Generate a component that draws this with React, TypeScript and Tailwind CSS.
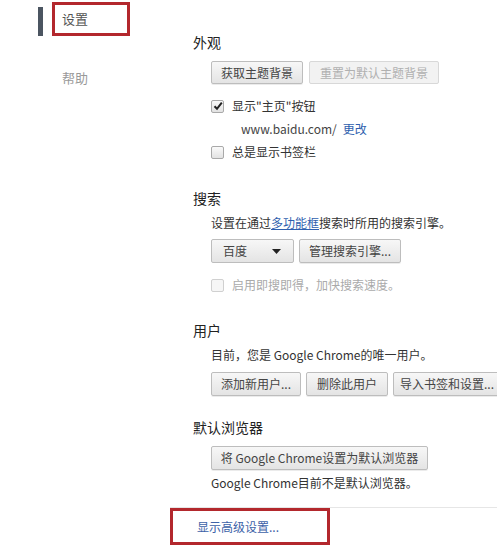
import React from 'react'

const font = { fontFamily: '"Noto Sans CJK SC", "Liberation Sans", sans-serif' }

const Button = ({
  label,
  width,
  disabled = false,
}: {
  label: string
  width: string
  disabled?: boolean
}) => (
  <div
    className={`flex h-full shrink-0 items-center justify-center whitespace-nowrap rounded-[2px] border text-[12px] ${width} ${
      disabled
        ? 'border-[#d8d8d8] bg-[#f2f2f2] text-[#b0b0b0]'
        : 'border-[#bdbdbd] bg-gradient-to-b from-[#f7f7f7] to-[#e4e4e4] text-[#444] shadow-[0_1px_0_rgba(0,0,0,0.08)]'
    }`}
  >
    {label}
  </div>
)

const Checkbox = ({ checked = false, disabled = false }: { checked?: boolean; disabled?: boolean }) => (
  <div
    className={`flex h-[13px] w-[13px] shrink-0 items-center justify-center rounded-[2px] border ${
      disabled ? 'border-[#d0d0d0] bg-[#f6f6f6]' : 'border-[#a9a9a9] bg-gradient-to-b from-[#fafafa] to-[#e2e2e2]'
    }`}
  >
    {checked && (
      <svg width="10" height="10" viewBox="0 0 10 10">
        <path d="M1.5 5.2 L4 7.8 L8.8 1.6" fill="none" stroke="#222" strokeWidth="2" />
      </svg>
    )}
  </div>
)

const Heading = ({ children, mt }: { children: React.ReactNode; mt: string }) => (
  <div className={`flex h-[20px] items-center pl-[23px] text-[14px] text-[#222] ${mt}`}>{children}</div>
)

export default function App() {
  return (
    <div className="flex h-[555px] w-[497px] overflow-hidden bg-white" style={font}>
      {/* 左侧导航 */}
      <div className="flex w-[170px] shrink-0 flex-col">
        <div className="ml-[38px] mt-[2px] flex">
          <div className="mt-[5px] h-[29px] w-[5px] bg-[#4b5561]" />
          <div className="ml-[9px] flex h-[34px] w-[78px] items-center border-[3px] border-[#b3282d] pl-[7px] text-[13px] text-[#555]">
            设置
          </div>
        </div>
        <div className="ml-[62px] mt-[32px] text-[13px] text-[#999]">帮助</div>
      </div>

      {/* 右侧设置内容 */}
      <div className="flex flex-1 flex-col pt-[32px] text-[12px] text-[#333]">
        <Heading mt="mt-0">外观</Heading>
        <div className="ml-[41px] mt-[9px] flex h-[23px] gap-[6px]">
          <Button label="获取主题背景" width="w-[92px]" />
          <Button label="重置为默认主题背景" width="w-[130px]" disabled />
        </div>
        <div className="ml-[41px] mt-[12px] flex h-[20px] items-center gap-[8px]">
          <Checkbox checked />
          <span>显示"主页"按钮</span>
        </div>
        <div className="ml-[71px] mt-[3px] flex h-[20px] items-center gap-[6px]">
          <span className="text-[#444]">www.baidu.com/</span>
          <span className="text-[#2f5fae]">更改</span>
        </div>
        <div className="ml-[41px] mt-[3px] flex h-[20px] items-center gap-[8px]">
          <Checkbox />
          <span>总是显示书签栏</span>
        </div>

        <Heading mt="mt-[26px]">搜索</Heading>
        <div className="ml-[41px] mt-[5px] flex h-[20px] items-center">
          <span>设置在通过</span>
          <span className="text-[#2f5fae] underline">多功能框</span>
          <span>搜索时所用的搜索引擎。</span>
        </div>
        <div className="ml-[41px] mt-[6px] flex h-[24px] gap-[5px]">
          <div className="flex h-full w-[83px] items-center justify-between rounded-[2px] border border-[#bdbdbd] bg-gradient-to-b from-[#f7f7f7] to-[#e4e4e4] pl-[11px] pr-[12px] text-[#444]">
            <span>百度</span>
            <svg width="9" height="5" viewBox="0 0 9 5">
              <path d="M0 0 H9 L4.5 5 Z" fill="#222" />
            </svg>
          </div>
          <Button label="管理搜索引擎..." width="w-[102px]" />
        </div>
        <div className="ml-[41px] mt-[12px] flex h-[20px] items-center gap-[8px] text-[#aaa]">
          <Checkbox disabled />
          <span>启用即搜即得，加快搜索速度。</span>
        </div>

        <Heading mt="mt-[25px]">用户</Heading>
        <div className="ml-[41px] mt-[5px] flex h-[20px] items-center">
          目前，您是 Google Chrome的唯一用户。
        </div>
        <div className="ml-[41px] mt-[7px] flex h-[24px] gap-[5px]">
          <Button label="添加新用户..." width="w-[90px]" />
          <Button label="删除此用户" width="w-[82px]" />
          <Button label="导入书签和设置..." width="w-[108px]" />
        </div>

        <Heading mt="mt-[21px]">默认浏览器</Heading>
        <div className="ml-[41px] mt-[9px] flex h-[24px]">
          <Button label="将 Google Chrome设置为默认浏览器" width="w-[217px]" />
        </div>
        <div className="ml-[41px] mt-[3px] flex h-[20px] items-center">
          Google Chrome目前不是默认浏览器。
        </div>

        <div className="mt-[14px] h-px w-full bg-[#e6e6e6]" />
        <div className="flex h-[37px] w-[160px] items-center border-[3px] border-[#b3282d] pl-[24px] text-[#3d62a8]">
          显示高级设置...
        </div>
      </div>
    </div>
  )
}
